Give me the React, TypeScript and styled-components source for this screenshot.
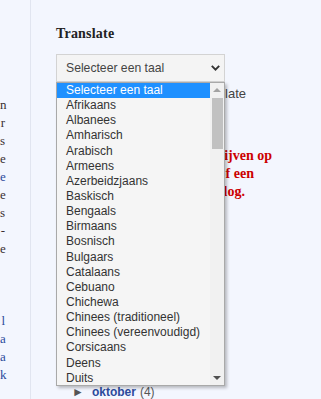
import React from 'react';
import styled, { createGlobalStyle } from 'styled-components';

const GlobalStyle = createGlobalStyle`
  html, body {
    margin: 0;
    padding: 0;
    background: #f3f6fe;
  }
  body {
    font-family: "Liberation Serif", serif;
  }
`;

const languages = [
  'Selecteer een taal',
  'Afrikaans',
  'Albanees',
  'Amharisch',
  'Arabisch',
  'Armeens',
  'Azerbeidzjaans',
  'Baskisch',
  'Bengaals',
  'Birmaans',
  'Bosnisch',
  'Bulgaars',
  'Catalaans',
  'Cebuano',
  'Chichewa',
  'Chinees (traditioneel)',
  'Chinees (vereenvoudigd)',
  'Corsicaans',
  'Deens',
  'Duits',
];

const sideLines = [
  { t: 'n', link: false },
  { t: 'r', link: false },
  { t: 's', link: false },
  { t: 'e', link: false },
  { t: 'e', link: true },
  { t: 'e', link: false },
  { t: 's', link: false },
  { t: '-', link: false },
  { t: 'e', link: false },
  { t: '', link: false },
  { t: '', link: false },
  { t: '', link: false },
  { t: 'l', link: true },
  { t: 'a', link: true },
  { t: 'a', link: true },
  { t: 'k', link: true },
];

// line ends of the red notice, measured from the column's left edge
const notice = [
  { text: 'je in te schrijven op', end: 216 },
  { text: 'deze blog of een', end: 198 },
  { text: 'andere blog.', end: 189 },
];

const Page = styled.div`
  display: flex;
  height: 399px;
  overflow: hidden;
`;

const Sidebar = styled.aside`
  width: 31px;
  flex-shrink: 0;
  border-right: 1px solid #e1e5f0;
  padding-top: 96px;
  overflow: hidden;
  box-sizing: border-box;
`;

const SideLine = styled.div<{ $link: boolean }>`
  height: 18px;
  line-height: 18px;
  font-size: 13px;
  text-align: right;
  padding-right: 25px;
  color: ${(p) => (p.$link ? '#2b4a9c' : '#3a3030')};
  white-space: nowrap;
`;

const Main = styled.main`
  flex: 1;
  padding: 26px 0 0 25px;
`;

const Heading = styled.h2`
  margin: 0 0 12px 0;
  font-family: "Liberation Serif", serif;
  font-size: 14px;
  font-weight: bold;
  color: #222222;
  letter-spacing: 0.2px;
`;

const Widget = styled.div`
  position: relative;
  width: 169px;
`;

const SelectBox = styled.div`
  box-sizing: border-box;
  height: 28px;
  width: 169px;
  border: 1px solid #d3d3d3;
  background: #f4f4f4;
  display: flex;
  align-items: center;
  justify-content: space-between;
  padding: 0 4px 0 9px;
  font-family: "Liberation Sans", Arial, sans-serif;
  font-size: 12.2px;
  color: #444444;
`;

const Powered = styled.div`
  margin-top: 4px;
  height: 15px;
  display: flex;
  justify-content: flex-end;
  width: 190px;
  font-family: "Liberation Sans", Arial, sans-serif;
  font-size: 13px;
  color: #444444;
  white-space: nowrap;
`;

const Notice = styled.p`
  margin: 46px 0 0 0;
  font-family: "Liberation Serif", serif;
  font-weight: bold;
  font-size: 14px;
  line-height: 18px;
  color: #cc0000;
`;

const NoticeLine = styled.span<{ $end: number }>`
  display: block;
  width: ${(p) => p.$end}px;
  text-align: right;
  white-space: nowrap;
`;

const Archive = styled.ul`
  list-style: none;
  margin: 184px 0 0 16px;
  padding: 0;
  font-family: "Liberation Sans", Arial, sans-serif;
  font-size: 12px;
  line-height: 15px;
`;

const ArchiveItem = styled.li`
  color: #555555;
  a {
    color: #2b4a9c;
    font-weight: bold;
    margin: 0 4px 0 8px;
  }
`;

const Dropdown = styled.div`
  position: absolute;
  top: 28px;
  left: 0;
  width: 169px;
  height: 304px;
  box-sizing: border-box;
  border: 1px solid #a9a9a9;
  background: #f5f5f5;
  box-shadow: 2px 2px 3px rgba(0, 0, 0, 0.25);
  display: flex;
  z-index: 5;
`;

const Options = styled.ul`
  list-style: none;
  margin: 0;
  padding: 0;
  flex: 1;
  font-family: "Liberation Sans", Arial, sans-serif;
  font-size: 12px;
  overflow: hidden;
`;

const Option = styled.li<{ $selected: boolean }>`
  height: 15.15px;
  line-height: 15.15px;
  padding-left: 9px;
  white-space: nowrap;
  color: ${(p) => (p.$selected ? '#ffffff' : '#333333')};
  background: ${(p) => (p.$selected ? '#1e90ff' : 'transparent')};
`;

const Scrollbar = styled.div`
  width: 14px;
  background: #f1f1f1;
  display: flex;
  flex-direction: column;
  align-items: center;
`;

const ScrollArrow = styled.div<{ $dir: 'up' | 'down' }>`
  height: 14px;
  width: 14px;
  display: flex;
  align-items: center;
  justify-content: center;
  &::before {
    content: '';
    border-left: 4px solid transparent;
    border-right: 4px solid transparent;
    ${(p) =>
      p.$dir === 'up'
        ? 'border-bottom: 4px solid #a3a3a3;'
        : 'border-top: 4px solid #505050;'}
  }
`;

const Thumb = styled.div`
  width: 11px;
  height: 51px;
  margin-top: 1px;
  background: #c1c1c1;
`;

const Spacer = styled.div`
  flex: 1;
`;

const Chevron = () => (
  <svg width="9" height="6" viewBox="0 0 9 6">
    <path d="M0.8 0.8 L4.5 4.6 L8.2 0.8" fill="none" stroke="#333" strokeWidth="1.9" />
  </svg>
);

export default function App() {
  return (
    <>
      <GlobalStyle />
      <Page>
        <Sidebar>
          {sideLines.map((l, i) => (
            <SideLine key={i} $link={l.link}>
              {l.t}
            </SideLine>
          ))}
        </Sidebar>
        <Main>
          <Heading>Translate</Heading>
          <Widget>
            <SelectBox>
              <span>Selecteer een taal</span>
              <Chevron />
            </SelectBox>
            <Powered>Google Translate</Powered>
            <Notice>
              {notice.map((n) => (
                <NoticeLine key={n.text} $end={n.end}>
                  {n.text}
                </NoticeLine>
              ))}
            </Notice>
            <Archive>
              <ArchiveItem>
                ►<a>oktober</a>(4)
              </ArchiveItem>
            </Archive>
            <Dropdown>
              <Options>
                {languages.map((l, i) => (
                  <Option key={l} $selected={i === 0}>
                    {l}
                  </Option>
                ))}
              </Options>
              <Scrollbar>
                <ScrollArrow $dir="up" />
                <Thumb />
                <Spacer />
                <ScrollArrow $dir="down" />
              </Scrollbar>
            </Dropdown>
          </Widget>
        </Main>
      </Page>
    </>
  );
}
